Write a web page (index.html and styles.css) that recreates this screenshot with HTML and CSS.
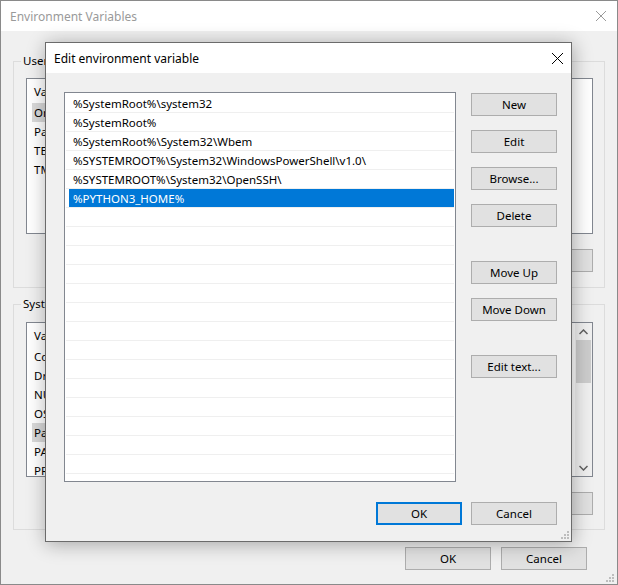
FILE: index.html
```html
<!DOCTYPE html>
<html lang="en">
<head>
    <meta charset="UTF-8">
    <title>Environment Variables</title>
    <link rel="stylesheet" href="styles.css">
</head>
<body>
    <div class="window">
        <div class="titlebar">
            <span class="title">Environment Variables</span>
            <span class="close">
                <svg width="10" height="10" viewBox="0 0 10 10"><path d="M0 0L10 10M10 0L0 10" stroke="#9a9a9a" stroke-width="1" fill="none"/></svg>
            </span>
        </div>

        <div class="main">
            <fieldset class="group">
                <legend>User variables for user</legend>
                <div class="listview">
                    <div class="lv-body">
                        <div class="lv-head"><span class="col-name">Variable</span><span class="col-value">Value</span></div>
                        <div class="lv-row selected"><span class="col-name">OneDrive</span><span class="col-value">C:\Users\user\OneDrive</span></div>
                        <div class="lv-row"><span class="col-name">Path</span><span class="col-value">C:\Users\user\AppData\Local\Microsoft\WindowsApps;</span></div>
                        <div class="lv-row"><span class="col-name">TEMP</span><span class="col-value">C:\Users\user\AppData\Local\Temp</span></div>
                        <div class="lv-row"><span class="col-name">TMP</span><span class="col-value">C:\Users\user\AppData\Local\Temp</span></div>
                    </div>
                </div>
                <div class="group-buttons">
                    <button class="btn">New...</button>
                    <button class="btn">Edit...</button>
                    <button class="btn">Delete</button>
                </div>
            </fieldset>

            <fieldset class="group system">
                <legend>System variables</legend>
                <div class="listview tall">
                    <div class="lv-body">
                        <div class="lv-head"><span class="col-name">Variable</span><span class="col-value">Value</span></div>
                        <div class="lv-row"><span class="col-name">ComSpec</span><span class="col-value">C:\Windows\system32\cmd.exe</span></div>
                        <div class="lv-row"><span class="col-name">DriverData</span><span class="col-value">C:\Windows\System32\Drivers\DriverData</span></div>
                        <div class="lv-row"><span class="col-name">NUMBER_OF_PROCESSORS</span><span class="col-value">8</span></div>
                        <div class="lv-row"><span class="col-name">OS</span><span class="col-value">Windows_NT</span></div>
                        <div class="lv-row selected"><span class="col-name">Path</span><span class="col-value">C:\Windows\system32;C:\Windows;</span></div>
                        <div class="lv-row"><span class="col-name">PATHEXT</span><span class="col-value">.COM;.EXE;.BAT;.CMD;.VBS;.VBE;.JS</span></div>
                        <div class="lv-row"><span class="col-name">PROCESSOR_ARCHITECTURE</span><span class="col-value">AMD64</span></div>
                    </div>
                    <div class="scrollbar">
                        <span class="sb-arrow">
                            <svg width="9" height="6" viewBox="0 0 9 6"><path d="M0.5 5L4.5 1L8.5 5" stroke="#606060" stroke-width="1.5" fill="none"/></svg>
                        </span>
                        <div class="sb-track"><div class="sb-thumb"></div></div>
                        <span class="sb-arrow">
                            <svg width="9" height="6" viewBox="0 0 9 6"><path d="M0.5 1L4.5 5L8.5 1" stroke="#606060" stroke-width="1.5" fill="none"/></svg>
                        </span>
                    </div>
                </div>
                <div class="group-buttons">
                    <button class="btn">New...</button>
                    <button class="btn">Edit...</button>
                    <button class="btn">Delete</button>
                </div>
            </fieldset>

            <div class="footer">
                <button class="btn">OK</button>
                <button class="btn">Cancel</button>
            </div>
        </div>

        <svg class="grip" width="8" height="8" viewBox="0 0 8 8">
            <rect x="6" y="0" width="2" height="2"/><rect x="3" y="3" width="2" height="2"/><rect x="6" y="3" width="2" height="2"/>
            <rect x="0" y="6" width="2" height="2"/><rect x="3" y="6" width="2" height="2"/><rect x="6" y="6" width="2" height="2"/>
        </svg>

        <!-- the modal on top -->
        <div class="dialog">
            <div class="titlebar">
                <span class="title">Edit environment variable</span>
                <span class="close">
                    <svg width="11" height="11" viewBox="0 0 11 11"><path d="M0 0L11 11M11 0L0 11" stroke="#000" stroke-width="1" fill="none"/></svg>
                </span>
            </div>

            <div class="dialog-body">
                <div class="path-list">
                    <div class="path-row"><span class="path">%SystemRoot%\system32</span></div>
                    <div class="path-row"><span class="path">%SystemRoot%</span></div>
                    <div class="path-row"><span class="path">%SystemRoot%\System32\Wbem</span></div>
                    <div class="path-row"><span class="path">%SYSTEMROOT%\System32\WindowsPowerShell\v1.0\</span></div>
                    <div class="path-row"><span class="path">%SYSTEMROOT%\System32\OpenSSH\</span></div>
                    <div class="path-row selected"><span class="path">%PYTHON3_HOME%</span></div>
                    <div class="path-row"></div>
                    <div class="path-row"></div>
                    <div class="path-row"></div>
                    <div class="path-row"></div>
                    <div class="path-row"></div>
                    <div class="path-row"></div>
                    <div class="path-row"></div>
                    <div class="path-row"></div>
                    <div class="path-row"></div>
                    <div class="path-row"></div>
                    <div class="path-row"></div>
                    <div class="path-row"></div>
                    <div class="path-row"></div>
                    <div class="path-row"></div>
                    <div class="path-row"></div>
                </div>

                <div class="side-buttons">
                    <button class="btn">New</button>
                    <button class="btn">Edit</button>
                    <button class="btn">Browse...</button>
                    <button class="btn">Delete</button>
                    <button class="btn spaced">Move Up</button>
                    <button class="btn">Move Down</button>
                    <button class="btn spaced">Edit text...</button>
                </div>
            </div>

            <div class="dialog-footer">
                <button class="btn default">OK</button>
                <button class="btn">Cancel</button>
            </div>

            <svg class="grip" width="8" height="8" viewBox="0 0 8 8">
                <rect x="6" y="0" width="2" height="2"/><rect x="3" y="3" width="2" height="2"/><rect x="6" y="3" width="2" height="2"/>
                <rect x="0" y="6" width="2" height="2"/><rect x="3" y="6" width="2" height="2"/><rect x="6" y="6" width="2" height="2"/>
            </svg>
        </div>
    </div>
</body>
</html>
```

FILE: styles.css
```css
* {
    box-sizing: border-box;
}
body {
    margin: 0;
    background: #f0f0f0;
    font-family: "Noto Sans", sans-serif;
    font-size: 11.5px;
    color: #000;
}
.window {
    position: relative;
    width: 618px;
    height: 585px;
    border: 1px solid #8a8a8a;
    background: #f0f0f0;
    overflow: hidden;
}
.titlebar {
    display: flex;
    align-items: center;
    justify-content: space-between;
    height: 30px;
    background: #fff;
    padding-left: 9px;
    font-size: 12px;
}
.titlebar .title {
    color: #9a9a9a;
}
.close {
    display: flex;
    align-items: center;
    justify-content: center;
    width: 32px;
    height: 30px;
}
.main {
    padding: 0 12px;
}

/* group boxes */
.group {
    margin: 22px 0 0;
    padding: 9px 11px 15px 12px;
    border: 1px solid #dcdcdc;
    min-width: 0;
}
.group legend {
    margin-left: -5px;
    padding: 0 2px;
    line-height: 16px;
}
.group.system {
    margin-top: 8px;
    padding-top: 10px;
    padding-bottom: 14px;
}
.listview {
    display: flex;
    height: 156px;
    border: 1px solid #828790;
    background: #fff;
    overflow: hidden;
}
.listview.tall {
    height: 155px;
}
.lv-body {
    flex: 1;
    min-width: 0;
    overflow: hidden;
}
.lv-head {
    display: flex;
    align-items: center;
    height: 24px;
    padding-left: 7px;
    white-space: nowrap;
}
.lv-row {
    display: flex;
    height: 19px;
    margin-left: 5px;
    white-space: nowrap;
}
.lv-row .col-name {
    padding-left: 2px;
    line-height: 19px;
}
.lv-row .col-value {
    padding-left: 4px;
    line-height: 19px;
}
.lv-row.selected .col-name {
    background: #d9d9d9;
}
.col-name {
    width: 190px;
    flex-shrink: 0;
}
.scrollbar {
    display: flex;
    flex-direction: column;
    width: 17px;
    background: #f0f0f0;
}
.sb-arrow {
    display: flex;
    align-items: center;
    justify-content: center;
    height: 17px;
}
.sb-track {
    flex: 1;
    padding: 0 1px;
}
.sb-thumb {
    height: 43px;
    background: #cdcdcd;
}
.group-buttons {
    display: flex;
    justify-content: flex-end;
    gap: 10px;
    margin-top: 15px;
}

/* buttons */
.btn {
    width: 86px;
    height: 23px;
    padding: 0;
    border: 1px solid #adadad;
    background: #e1e1e1;
    font-family: "Noto Sans", sans-serif;
    font-size: 11.5px;
    color: #000;
}
.btn.default {
    border: 2px solid #0078d7;
}
.footer {
    display: flex;
    justify-content: flex-end;
    gap: 10px;
    margin-top: 17px;
    padding-right: 18px;
}
.grip {
    position: absolute;
    right: 3px;
    bottom: 2px;
    fill: #bdbdbd;
}

/* edit dialog */
.dialog {
    position: absolute;
    left: 44px;
    top: 41px;
    width: 527px;
    height: 500px;
    border: 1px solid #6b6b6b;
    background: #f0f0f0;
    box-shadow: 1px 2px 18px rgba(0, 0, 0, 0.32);
}
.dialog .titlebar {
    padding-left: 8px;
}
.dialog .titlebar .title {
    color: #000;
}
.dialog .close {
    width: 28px;
}
.dialog-body {
    display: flex;
    gap: 15px;
    padding: 19px 14px 0 18px;
}
.path-list {
    width: 392px;
    height: 390px;
    padding-top: 1px;
    border: 1px solid #828790;
    background: #fff;
    overflow: hidden;
}
.path-row {
    display: flex;
    height: 19px;
    margin: 0 1px;
    padding-left: 3px;
    border-bottom: 1px solid #efefef;
}
.path {
    flex: 1;
    padding-left: 4px;
    line-height: 19px;
    white-space: nowrap;
}
.path-row.selected .path {
    background: #0078d7;
    color: #fff;
}
.side-buttons {
    display: flex;
    flex-direction: column;
    padding-top: 1px;
}
.side-buttons .btn + .btn {
    margin-top: 14px;
}
.side-buttons .btn.spaced {
    margin-top: 34px;
}
.dialog-footer {
    display: flex;
    justify-content: flex-end;
    gap: 9px;
    padding: 20px 14px 0 0;
}
.dialog .grip {
    right: 2px;
    bottom: 2px;
}
```
